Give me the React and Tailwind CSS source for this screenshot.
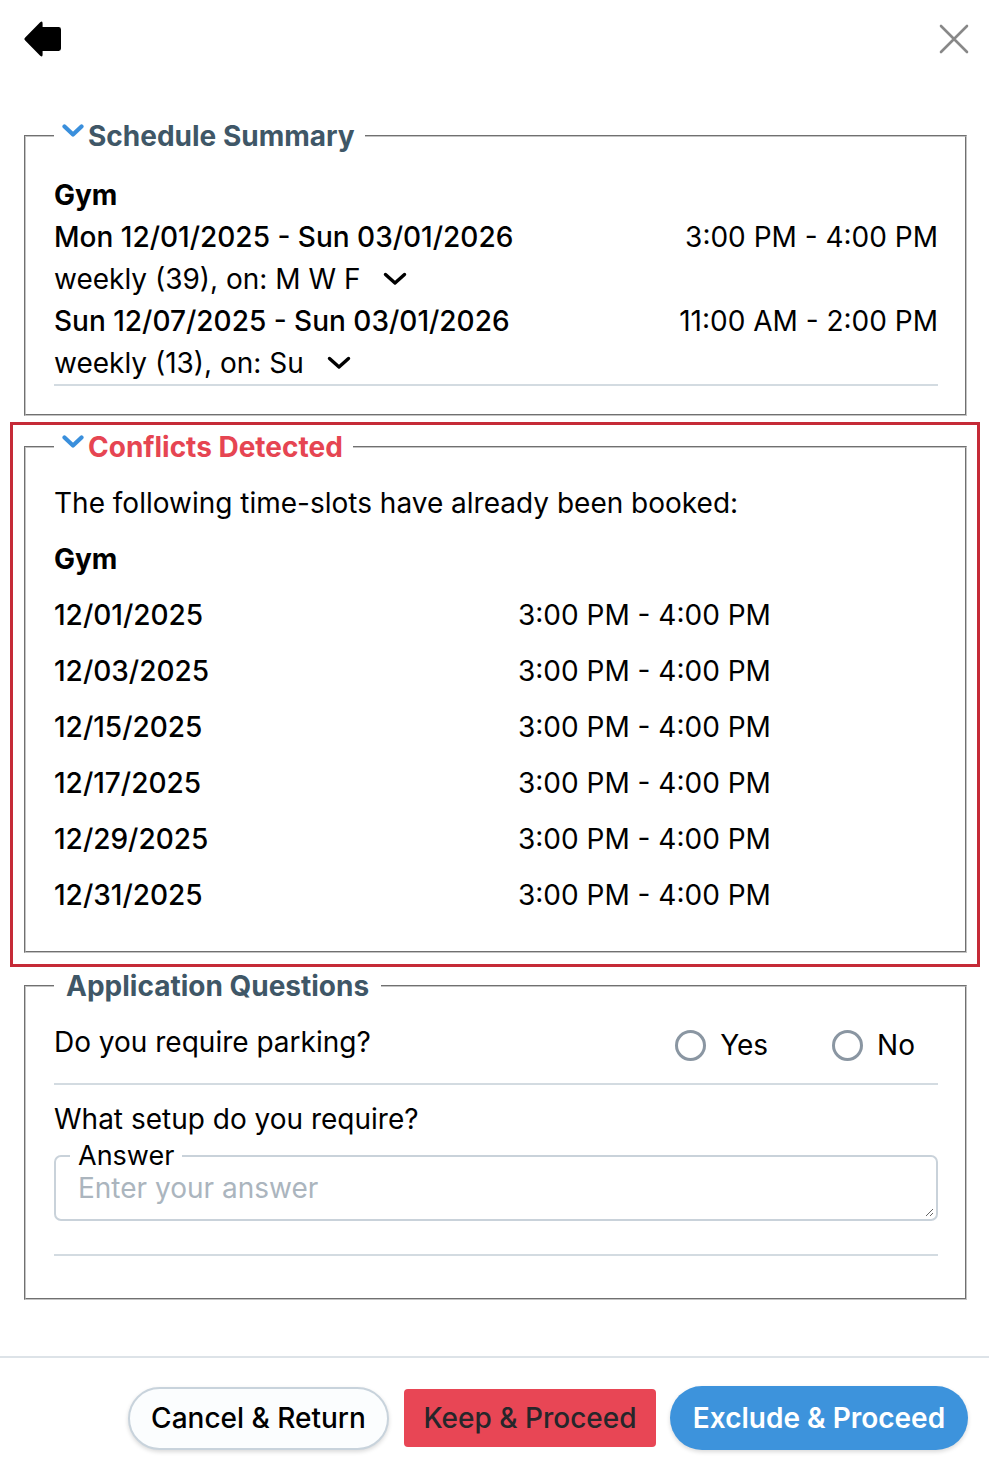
import React from 'react';

function BackArrow() {
  return (
    <svg width="38" height="36" viewBox="0 0 38 36" className="block">
      <path
        d="M1.2 16.4 L16.2 1.2 Q18.6 -0.8 18.6 2.4 L18.6 6 L34.6 6 Q37 6 37 8.4 L37 27.6 Q37 30 34.6 30 L18.6 30 L18.6 33.6 Q18.6 36.8 16.2 34.8 L1.2 19.6 Q-0.4 18 1.2 16.4 Z"
        fill="#000"
      />
    </svg>
  );
}

function CloseX() {
  return (
    <svg width="30" height="30" viewBox="0 0 30 30" className="block">
      <path d="M2 2 L28 28 M28 2 L2 28" stroke="#888" strokeWidth="2.6" strokeLinecap="round" />
    </svg>
  );
}

function LegendChevron() {
  return (
    <svg width="22" height="14" viewBox="0 0 22 14" className="block">
      <path d="M2.5 2.5 L11 10.5 L19.5 2.5" fill="none" stroke="#3a8fdc" strokeWidth="4.2" strokeLinecap="round" strokeLinejoin="round" />
    </svg>
  );
}

function RowChevron() {
  return (
    <svg width="24" height="14" viewBox="0 0 24 14" className="block">
      <path d="M2.5 2.5 L12 11 L21.5 2.5" fill="none" stroke="#000" strokeWidth="3.4" strokeLinecap="round" strokeLinejoin="round" />
    </svg>
  );
}

function Radio({ label }) {
  return (
    <label className="flex items-center gap-[14px]">
      <span className="w-[31px] h-[31px] rounded-full border-[3px] border-[#8a96a2] bg-white" />
      <span>{label}</span>
    </label>
  );
}

const conflicts = ['12/01/2025', '12/03/2025', '12/15/2025', '12/17/2025', '12/29/2025', '12/31/2025'];

export default function App() {
  return (
    <div className="w-[989px] min-h-[1478px] bg-white text-black text-[28px] font-['Inter','Noto_Sans',sans-serif]">
      {/* Header */}
      <div className="h-[119px] flex justify-between items-start pl-[24px] pr-[20px] pt-[21px]">
        <BackArrow />
        <div className="pt-[3px]">
          <CloseX />
        </div>
      </div>

      {/* Schedule Summary */}
      <fieldset className="ml-[24px] mr-[22px] border-2 [border-style:groove] border-[#c4c4c4] pl-[28px] pr-[27px] pt-[21px] pb-[28px]">
        <legend className="flex items-center pl-[8px] pr-[10px] leading-[34px] text-[28px] font-bold text-[#3f5767]">
          <span className="-mt-[10px] mr-[4px]"><LegendChevron /></span>
          Schedule Summary
        </legend>
        <div className="leading-[42px]">
          <div className="font-bold">Gym</div>
          <div className="flex justify-between">
            <span className="font-medium">Mon 12/01/2025 - Sun 03/01/2026</span>
            <span>3:00 PM - 4:00 PM</span>
          </div>
          <div className="flex items-center gap-[23px]">
            <span>weekly (39), on: M W F</span>
            <RowChevron />
          </div>
          <div className="flex justify-between">
            <span className="font-medium">Sun 12/07/2025 - Sun 03/01/2026</span>
            <span>11:00 AM - 2:00 PM</span>
          </div>
          <div className="flex items-center gap-[23px] border-b-2 border-[#d3dbe1]">
            <span>weekly (13), on: Su</span>
            <RowChevron />
          </div>
        </div>
      </fieldset>

      {/* Conflicts */}
      <div className="mt-[6px] ml-[10px] mr-[9px] border-[3px] border-[#c52a37] pl-[11px] pr-[10px] pt-[5px] pb-[11px]">
        <fieldset className="border-2 [border-style:groove] border-[#c4c4c4] pl-[28px] pr-[27px] pt-[11px] pb-[28px]">
          <legend className="flex items-center pl-[8px] pr-[10px] leading-[34px] text-[28px] font-bold text-[#e64552]">
            <span className="-mt-[10px] mr-[4px]"><LegendChevron /></span>
            Conflicts Detected
          </legend>
          <div className="leading-[56px]">
            <div>The following time-slots have already been booked:</div>
            <div className="font-bold">Gym</div>
            {conflicts.map((d) => (
              <div key={d} className="grid grid-cols-[464px_auto]">
                <span className="font-medium">{d}</span>
                <span>3:00 PM - 4:00 PM</span>
              </div>
            ))}
          </div>
        </fieldset>
      </div>

      {/* Application Questions */}
      <fieldset className="mt-[2px] ml-[24px] mr-[22px] border-2 [border-style:groove] border-[#c4c4c4] pl-[28px] pr-[27px] pt-[18px] pb-[42px]">
        <legend className="px-[12px] leading-[34px] text-[28px] font-bold text-[#3f5767]">Application Questions</legend>
        <div className="flex justify-between items-start h-[64px] border-b-2 border-[#d3dbe1] leading-[42px]">
          <span>Do you require parking?</span>
          <div className="flex items-center gap-[64px] pr-[23px] mt-[3px]">
            <Radio label="Yes" />
            <Radio label="No" />
          </div>
        </div>
        <div className="pt-[13px] leading-[42px]">What setup do you require?</div>
        <fieldset className="border-2 border-[#c9d2da] rounded-[7px] pl-[22px] pr-[2px] pb-[2px]">
          <legend className="-ml-[8px] px-[8px] text-[27px] leading-[31px]">Answer</legend>
          <textarea
            rows={1}
            placeholder="Enter your answer"
            className="block w-full h-[46px] text-[28px] leading-[34px] bg-transparent outline-none placeholder:text-[#abb5be] resize-y"
          />
        </fieldset>
        <div className="mt-[33px] border-b-2 border-[#d3dbe1]" />
      </fieldset>

      {/* Footer */}
      <div className="mt-[56px] border-t-2 border-[#dde3e8] pt-[28px] pr-[21px] flex justify-end items-center">
        <button className="w-[261px] h-[63px] rounded-full bg-[#fbfdfe] border-2 border-[#c8d3dc] shadow-[0_2px_4px_rgba(0,0,0,0.15)] text-[28px] font-medium text-black">
          Cancel &amp; Return
        </button>
        <button className="ml-[15px] w-[252px] h-[58px] rounded-[4px] bg-[#e84655] text-[28px] font-medium text-[#26262a]">
          Keep &amp; Proceed
        </button>
        <button className="ml-[14px] w-[298px] h-[64px] rounded-full bg-[#3d93dc] shadow-[0_2px_4px_rgba(0,0,0,0.15)] text-[28px] font-semibold text-white">
          Exclude &amp; Proceed
        </button>
      </div>
    </div>
  );
}
